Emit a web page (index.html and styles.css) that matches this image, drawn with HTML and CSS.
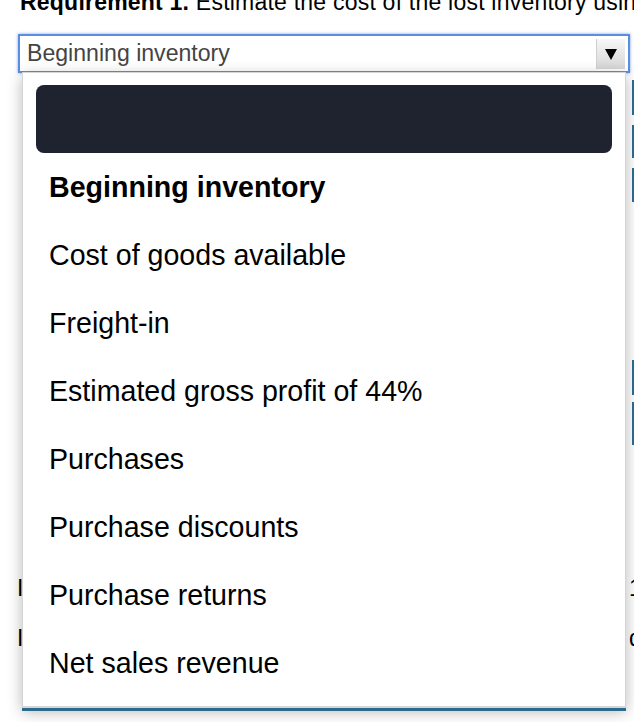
FILE: index.html
```html
<!DOCTYPE html>
<html>
<head>
<meta charset="utf-8">
<link rel="stylesheet" href="styles.css">
</head>
<body>
<div class="page">
  <h2 class="heading"><b>Requirement 1.</b> Estimate the cost of the lost inventory using the gross profit method.</h2>
  <div class="select">
    <span class="select-text">Beginning inventory</span>
    <span class="select-btn"><span class="tri"></span></span>
  </div>
  <div class="sheet">
    <div class="inputs">
      <div class="inp h35"></div>
      <div class="inp h33 gap10"></div>
      <div class="inp h34 gap10"></div>
      <div class="inp h35 gap158"></div>
      <div class="inp h43 gap7"></div>
    </div>
    <div class="row first"><span class="lbl">Inventory destroyed</span><span class="val">1</span></div>
    <div class="row"><span class="lbl">Insurance claim</span><span class="val">d</span></div>
  </div>
  <div class="listbox">
    <div class="highlight"></div>
    <div class="opt bold">Beginning inventory</div>
    <div class="opt">Cost of goods available</div>
    <div class="opt">Freight-in</div>
    <div class="opt">Estimated gross profit of 44%</div>
    <div class="opt">Purchases</div>
    <div class="opt">Purchase discounts</div>
    <div class="opt">Purchase returns</div>
    <div class="opt">Net sales revenue</div>
  </div>
</div>
</body>
</html>
```

FILE: styles.css
```css
html, body {
  margin: 0;
  padding: 0;
  background: #fff;
  overflow: hidden;
}
body {
  font-family: "Liberation Sans", Arial, sans-serif;
  color: #000;
  width: 634px;
  height: 722px;
}
.page {
  position: relative;
  width: 634px;
  height: 722px;
  overflow: hidden;
}
.heading {
  margin: -11px 0 0 20px;
  font-size: 23px;
  line-height: 26px;
  font-weight: normal;
  letter-spacing: 0.22px;
  white-space: nowrap;
}
.select {
  margin: 19px 0 0 18px;
  width: 612px;
  height: 39px;
  box-sizing: border-box;
  border: 2px solid #5a8fe0;
  box-shadow: 0 0 3px rgba(70, 120, 220, 0.7);
  background: #fff;
  display: flex;
  align-items: center;
  justify-content: space-between;
}
.select-text {
  padding-left: 7px;
  font-size: 23.1px;
  color: #444;
}
.select-btn {
  width: 29px;
  height: 30px;
  margin-right: 3px;
  box-sizing: border-box;
  border-left: 1px solid #cfcfcf;
  background: linear-gradient(#f7f7f7, #d6d6d6);
  display: flex;
  align-items: center;
  justify-content: center;
}
.tri {
  width: 0;
  height: 0;
  border-left: 6px solid transparent;
  border-right: 6px solid transparent;
  border-top: 11px solid #000;
  margin-top: 2px;
}
.sheet {
  margin-top: 7px;
  width: 760px;
}
.inputs {
  margin-left: 632px;
  width: 60px;
}
.inp {
  border-left: 3px solid #2e6d93;
  background: #fff;
}
.h35 { height: 35px; }
.h33 { height: 33px; }
.h34 { height: 34px; }
.h43 { height: 43px; }
.gap10 { margin-top: 10px; }
.gap7 { margin-top: 7px; }
.gap158 { margin-top: 158px; }
.row {
  display: flex;
  font-size: 23px;
  line-height: 26px;
  height: 26px;
  margin-top: 24px;
  white-space: nowrap;
}
.row.first {
  margin-top: 130px;
}
.lbl {
  margin-left: 17px;
  width: 611px;
  overflow: hidden;
}
.val {
  margin-left: 1px;
}
.listbox {
  position: absolute;
  left: 22px;
  top: 72px;
  width: 604px;
  box-sizing: border-box;
  background: #fff;
  border: 1px solid #d6d6d6;
  border-bottom: 2px solid #d6d6d6;
  padding: 12px 0 9px;
  box-shadow: 0 3px 0 #2c6a8d, 0 4px 14px rgba(0, 0, 0, 0.28);
}
.highlight {
  margin: 0 13px;
  height: 68px;
  border-radius: 8px;
  background: #1f2330;
}
.opt {
  height: 68px;
  line-height: 68px;
  padding-left: 26px;
  font-size: 28.6px;
  color: #000;
  white-space: nowrap;
}
.opt.bold {
  font-weight: bold;
}
```
